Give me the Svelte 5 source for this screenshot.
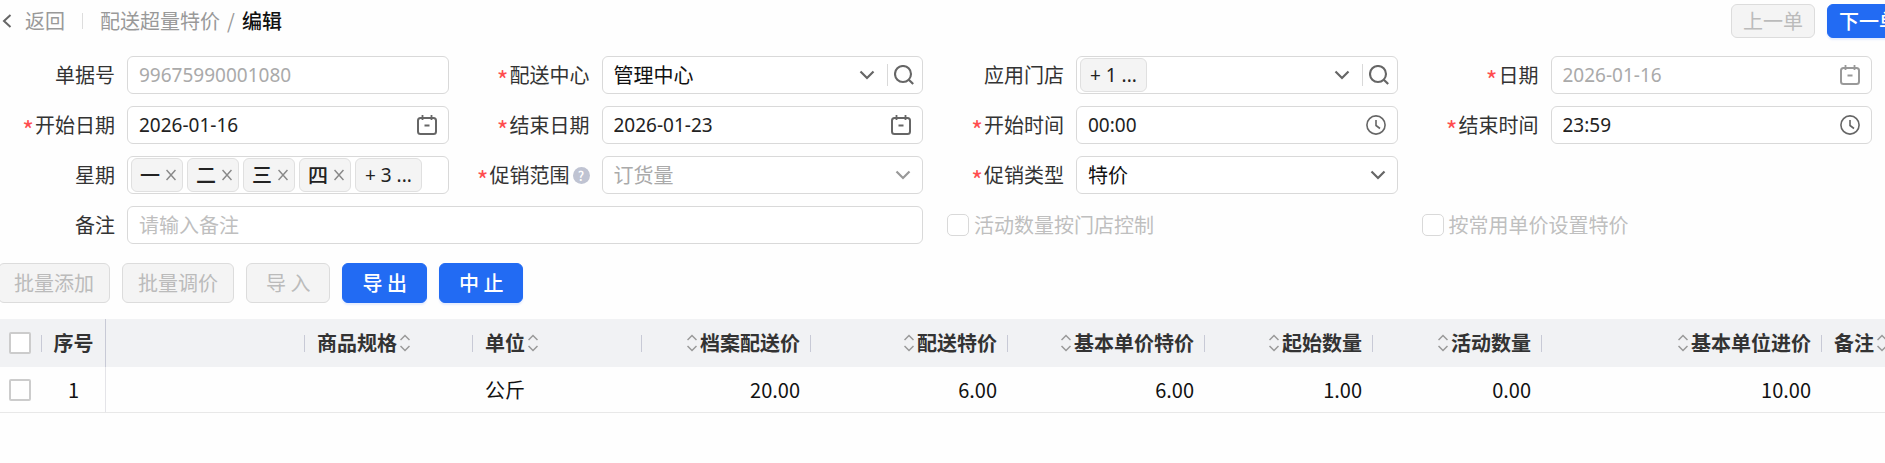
<script>
  const weekTags = ['一', '二', '三', '四'];

  const columns = [
    { label: '', width: 199, align: 'left', value: '' },
    { label: '商品规格', width: 168, align: 'left', value: '' },
    { label: '单位', width: 169, align: 'left', value: '公斤' },
    { label: '档案配送价', width: 169, align: 'right', value: '20.00' },
    { label: '配送特价', width: 197, align: 'right', value: '6.00' },
    { label: '基本单价特价', width: 197, align: 'right', value: '6.00' },
    { label: '起始数量', width: 168, align: 'right', value: '1.00' },
    { label: '活动数量', width: 169, align: 'right', value: '0.00' },
    { label: '基本单位进价', width: 280, align: 'right', value: '10.00' },
    { label: '备注', width: 0, align: 'left', value: '' }
  ];
</script>

{#snippet label(text, id, required = false)}
  <label for={id}>
    {#if required}<span class="star">*</span>{/if}{text}
  </label>
{/snippet}

{#snippet chevron()}
  <svg class="icon" width="16" height="16" viewBox="0 0 16 16"><path d="M1.5 4.5 8 11l6.500-6.500" stroke-width="2.200" /></svg>
{/snippet}

{#snippet search()}
  <svg class="icon" width="20" height="20" viewBox="0 0 20 20"><circle cx="9" cy="9" r="8" stroke-width="2.100" /><path d="m14.800 14.800 4.400 4.200" stroke-width="2.200" /></svg>
{/snippet}

{#snippet calendar()}
  <svg class="icon" width="20" height="20" viewBox="0 0 20 20"><rect x="1" y="3" width="18" height="16" rx="2.500" stroke-width="2" /><path d="M5.500 0v5M14.500 0v5M7.500 10.500h5" stroke-width="1.800" /></svg>
{/snippet}

{#snippet clock()}
  <svg class="icon" width="20" height="20" viewBox="0 0 20 20"><circle cx="10" cy="10" r="9.100" stroke-width="1.600" /><path d="M10 5v5.500l4 3" stroke-width="1.600" /></svg>
{/snippet}

{#snippet sorter()}
  <svg class="sorter" width="10" height="18" viewBox="0 0 10 18"><path d="M.5 6 5 1.500 9.500 6M.5 12 5 16.500 9.500 12" /></svg>
{/snippet}

<div class="page">
  <header>
    <button class="back" type="button">
      <svg width="10" height="14" viewBox="0 0 10 14"><path d="M8.500 1 2 7l6.500 6" /></svg>
      返回
    </button>
    <span class="rule"></span>
    <nav>
      <a href="#list">配送超量特价</a>
      <span class="slash">/</span>
      <strong>编辑</strong>
    </nav>
    <div class="pager">
      <button class="btn small" type="button" disabled>上一单</button>
      <button class="btn small primary" type="button">下一单</button>
    </div>
  </header>

  <form>
    <div class="item">
      {@render label('单据号', 'bill')}
      <div class="field off"><input id="bill" value="99675990001080" disabled /></div>
    </div>
    <div class="item">
      {@render label('配送中心', 'center', true)}
      <div class="field with-search">
        <select id="center"><option>管理中心</option></select>
        {@render chevron()}<span class="split"></span>{@render search()}
      </div>
    </div>
    <div class="item">
      {@render label('应用门店', 'stores')}
      <div class="field tags with-search">
        <span class="tag">+ 1 ...</span>
        <input id="stores" />
        {@render chevron()}<span class="split"></span>{@render search()}
      </div>
    </div>
    <div class="item">
      {@render label('日期', 'date', true)}
      <div class="field off"><input id="date" value="2026-01-16" disabled />{@render calendar()}</div>
    </div>

    <div class="item">
      {@render label('开始日期', 'from', true)}
      <div class="field"><input id="from" value="2026-01-16" />{@render calendar()}</div>
    </div>
    <div class="item">
      {@render label('结束日期', 'to', true)}
      <div class="field"><input id="to" value="2026-01-23" />{@render calendar()}</div>
    </div>
    <div class="item">
      {@render label('开始时间', 'start', true)}
      <div class="field"><input id="start" value="00:00" />{@render clock()}</div>
    </div>
    <div class="item">
      {@render label('结束时间', 'end', true)}
      <div class="field"><input id="end" value="23:59" />{@render clock()}</div>
    </div>

    <div class="item">
      {@render label('星期', 'week')}
      <div class="field tags">
        {#each weekTags as day}
          <span class="tag closable">{day}<button type="button" aria-label="移除"><svg width="10" height="12" viewBox="0 0 10 12"><path d="m.5 1 9 10M9.500 1l-9 10" stroke-width="1.500" /></svg></button></span>
        {/each}
        <span class="tag">+ 3 ...</span>
        <input id="week" />
      </div>
    </div>
    <div class="item">
      <label for="scope"><span class="star">*</span>促销范围<span class="help">?</span></label>
      <div class="field off">
        <select id="scope" disabled><option>订货量</option></select>
        {@render chevron()}
      </div>
    </div>
    <div class="item last">
      {@render label('促销类型', 'kind', true)}
      <div class="field">
        <select id="kind"><option>特价</option></select>
        {@render chevron()}
      </div>
    </div>

    <div class="item wide">
      {@render label('备注', 'note')}
      <div class="field"><input id="note" placeholder="请输入备注" /></div>
    </div>
    <label class="check"><input type="checkbox" disabled />活动数量按门店控制</label>
    <label class="check"><input type="checkbox" disabled />按常用单价设置特价</label>
  </form>

  <div class="toolbar">
    <button class="btn" type="button" disabled>批量添加</button>
    <button class="btn" type="button" disabled>批量调价</button>
    <button class="btn short" type="button" disabled>导 入</button>
    <button class="btn short primary" type="button">导 出</button>
    <button class="btn short primary" type="button">中 止</button>
  </div>

  <table>
    <colgroup>
      <col style="width: 42px" />
      <col style="width: 64px" />
      {#each columns as c}
        <col style={c.width ? `width: ${c.width}px` : ''} />
      {/each}
    </colgroup>
    <thead>
      <tr>
        <th class="pick"><div class="cell"><input type="checkbox" aria-label="全选" /></div></th>
        <th class="no">序号</th>
        {#each columns as c}
          <th>
            <div class="cell {c.align}">
              {#if c.label && c.align === 'right'}{@render sorter()}{/if}
              <span>{c.label}</span>
              {#if c.label && c.align === 'left'}{@render sorter()}{/if}
            </div>
          </th>
        {/each}
      </tr>
    </thead>
    <tbody>
      <tr>
        <td class="pick"><input type="checkbox" aria-label="选择" /></td>
        <td class="no">1</td>
        {#each columns as c}
          <td class={c.align}>{c.value}</td>
        {/each}
      </tr>
    </tbody>
  </table>
</div>

<style>
  :global(body) {
    background: #fefefe;
  }
  .page,
  .page * {
    box-sizing: border-box;
  }
  .page {
    overflow: hidden;
    font: 20px/30px 'Noto Sans CJK SC', sans-serif;
    color: #333;
  }
  button,
  input,
  select {
    font: inherit;
    color: inherit;
    margin: 0;
  }
  svg {
    display: block;
    flex: none;
    fill: none;
    stroke: currentColor;
  }

  header {
    display: flex;
    align-items: center;
    height: 42px;
    margin-right: -26px;
    color: #999;
  }
  .back {
    display: flex;
    align-items: center;
    gap: 13px;
    padding: 0 0 0 2px;
    border: 0;
    background: none;
  }
  .back svg {
    color: #666;
    stroke-width: 2;
  }
  .rule {
    width: 1px;
    height: 16px;
    margin: 0 17px;
    background: #ddd;
  }
  nav {
    display: flex;
  }
  nav a {
    color: inherit;
    text-decoration: none;
  }
  .slash {
    width: 22px;
    text-align: center;
  }
  nav strong {
    font-weight: 500;
    color: #111;
  }
  .pager {
    display: flex;
    gap: 12px;
    margin-left: auto;
  }

  .btn {
    height: 40px;
    padding: 0 15px;
    border: 1px solid #dcdcdc;
    border-radius: 6px;
    background: #f4f4f4;
    color: #bbb;
    line-height: 30px;
    white-space: nowrap;
  }
  .btn.small {
    height: 34px;
    padding: 0 11px;
    line-height: 28px;
  }
  .btn.short {
    padding: 0 19px;
    word-spacing: normal;
  }
  .btn.primary {
    border-color: #226bf3;
    background: #226bf3;
    color: #fff;
    font-weight: 500;
    box-shadow: 0 2px 2px rgba(5, 80, 255, 0.1);
  }

  form {
    display: grid;
    grid-template-columns: repeat(4, minmax(0, 1fr));
    gap: 12px 24px;
    margin: 14px 13px 0 -2px;
  }
  .item {
    display: flex;
    gap: 12px;
  }
  .last {
    grid-column: 3;
  }
  .wide {
    grid-column: 1 / span 2;
  }
  .item > label {
    display: flex;
    align-items: center;
    justify-content: flex-end;
    width: 117px;
    flex: none;
    white-space: nowrap;
  }
  .star {
    padding-top: 8px;
    margin-right: 1px;
    color: #ff4d4f;
    font-size: 25px;
  }
  .help {
    width: 17px;
    height: 17px;
    margin-left: 3px;
    border-radius: 50%;
    background: #bfc3d2;
    color: #fff;
    font-size: 13px;
    font-weight: 500;
    line-height: 17px;
    text-align: center;
  }
  .field {
    display: flex;
    align-items: center;
    flex: 1;
    min-width: 0;
    height: 38px;
    padding: 0 11px;
    border: 1px solid #d9d9d9;
    border-radius: 6px;
    background: #fff;
    color: #222;
  }
  .field input,
  .field select {
    flex: 1;
    width: 0;
    min-width: 0;
    height: 30px;
    padding: 0;
    border: 0;
    outline: 0;
    background: none;
    appearance: none;
    opacity: 1;
  }
  .field input {
    font: 19px/30px 'Noto Sans', 'Noto Sans CJK SC', sans-serif;
  }
  .field #note {
    font: inherit;
  }
  .field select {
    color: #111;
  }
  .field input::placeholder {
    color: #bfbfbf;
    opacity: 1;
  }
  .off input,
  .off select {
    color: #aaa;
  }
  .icon {
    color: #666;
  }
  .off .icon {
    color: #999;
  }
  .field.with-search {
    padding-right: 8px;
  }
  .split {
    width: 1px;
    height: 22px;
    margin: 0 6px 0 12px;
    background: #d9d9d9;
  }
  .field.tags {
    gap: 4px;
    padding-left: 3px;
  }
  .tags .split {
    margin: 0 2px 0 8px;
  }
  .tag {
    display: flex;
    align-items: center;
    flex: none;
    height: 34px;
    padding: 0 9px;
    border: 1px solid #e0e0e0;
    border-radius: 6px;
    background: #f4f4f4;
    font: 19px/30px 'Noto Sans', 'Noto Sans CJK SC', sans-serif;
  }
  .closable {
    gap: 6px;
    padding: 0 6px 0 8px;
    font: inherit;
    font-weight: 500;
  }
  .tag button {
    padding: 0;
    border: 0;
    background: none;
    color: #888;
  }
  .check {
    display: flex;
    align-items: center;
    gap: 5px;
    color: #bfbfbf;
    white-space: nowrap;
  }
  input[type='checkbox'] {
    appearance: none;
    flex: none;
    width: 22px;
    height: 22px;
    border: 1px solid #d9d9d9;
    border-radius: 5px;
    background: #fff;
  }

  .toolbar {
    display: flex;
    gap: 12px;
    margin: 19px 0 16px -2px;
  }

  table {
    width: 100%;
    table-layout: fixed;
    border-collapse: separate;
    border-spacing: 0;
  }
  th,
  td {
    padding: 0;
    white-space: nowrap;
  }
  th {
    height: 48px;
    background: #f1f2f4;
    font-weight: 700;
  }
  td {
    height: 46px;
    padding: 0 12px;
    border-bottom: 1px solid #e8e8e8;
    color: #111;
    text-align: left;
  }
  .cell {
    display: flex;
    align-items: center;
    gap: 3px;
    height: 17px;
    padding: 0 10px 0 12px;
    border-right: 1px solid #c8cad6;
  }
  .cell.right {
    justify-content: flex-end;
  }
  td.right {
    padding-right: 11px;
    text-align: right;
  }
  th:last-child .cell {
    border-right: 0;
  }
  .sorter {
    color: #999;
    stroke-width: 1.500;
  }
  td.no {
    padding: 0;
  }
  .no {
    border-right: 1px solid #c8cad6;
    text-align: center;
  }
  td.no {
    border-right-color: #e4e4e8;
    text-align: center;
  }
  th .cell input {
    margin-left: -3px;
  }
  td.pick {
    padding: 0 0 0 9px;
  }
  .pick input[type='checkbox'] {
    display: block;
    border: 2px solid #ccc;
    border-radius: 2px;
  }
</style>
